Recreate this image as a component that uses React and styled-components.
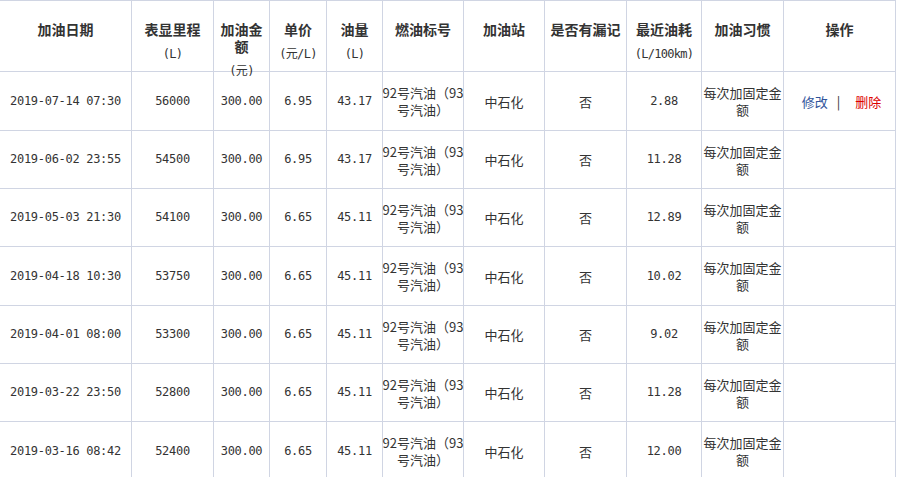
import React from 'react';
import styled, { createGlobalStyle } from 'styled-components';

const GlobalStyle = createGlobalStyle`
  html, body {
    margin: 0;
    padding: 0;
    background: #fff;
  }
  body {
    font-family: "Noto Sans CJK SC", sans-serif;
    color: #333;
  }
`;

const line = '#d0d5e3';
const mono = '"DejaVu Sans Mono", "Noto Sans CJK SC", monospace';
const cjk = '"Noto Sans CJK SC", "Noto Sans", sans-serif';

const Table = styled.div`
  display: grid;
  grid-template-columns: 132px 82px 56px 57px 56px 81px 81px 82px 75px 82px 112px;
  grid-template-rows: 71px 59px 58px 58px 59px 58px 58px 59px;
  width: 896px;
  border-top: 1px solid ${line};
  box-sizing: border-box;
`;

const HeadCell = styled.div`
  box-sizing: border-box;
  border-right: 1px solid ${line};
  border-bottom: 1px solid ${line};
  padding: 20px 4px 0;
  text-align: center;
  color: #333;
`;

const HeadTitle = styled.div`
  font-family: ${cjk};
  font-weight: bold;
  font-size: 14px;
  line-height: 17px;
`;

const HeadUnit = styled.div`
  margin-top: 8px;
  font-family: ${mono};
  font-size: 12px;
  letter-spacing: -0.7px;
  line-height: 17px;
  white-space: nowrap;
`;

const Cell = styled.div`
  box-sizing: border-box;
  border-right: 1px solid ${line};
  border-bottom: 1px solid ${line};
  display: flex;
  flex-direction: column;
  align-items: center;
  justify-content: center;
  text-align: center;
  padding: 0 ${p => (p.$tight ? 0 : 2)}px;
  padding-left: ${p => (p.$ops ? 6 : p.$tight ? 0 : 2)}px;
  font-family: ${p => (p.$num ? mono : cjk)};
  font-size: ${p => (p.$num ? 12 : 13)}px;
  letter-spacing: ${p => (p.$num ? '-0.3px' : 'normal')};
  line-height: 17px;
  color: #333;
  white-space: nowrap;
`;

const Line = styled.span`
  display: block;
  white-space: nowrap;
`;

const Ops = styled.div`
  display: flex;
  align-items: center;
  font-family: ${cjk};
  font-size: 13px;
`;

const OpLink = styled.a`
  color: ${p => (p.$danger ? '#dd0000' : '#2f539b')};
  text-decoration: none;
  cursor: pointer;
`;

const Sep = styled.span`
  margin: 0 15px 0 9px;
  color: #333;
`;

const headers = [
  { title: '加油日期' },
  { title: '表显里程', unit: '(L)' },
  { title: '加油金额', unit: '(元)' },
  { title: '单价', unit: '(元/L)' },
  { title: '油量', unit: '(L)' },
  { title: '燃油标号' },
  { title: '加油站' },
  { title: '是否有漏记' },
  { title: '最近油耗', unit: '(L/100km)' },
  { title: '加油习惯' },
  { title: '操作' },
];

const rows = [
  ['2019-07-14 07:30', '56000', '300.00', '6.95', '43.17', '2.88', true],
  ['2019-06-02 23:55', '54500', '300.00', '6.95', '43.17', '11.28'],
  ['2019-05-03 21:30', '54100', '300.00', '6.65', '45.11', '12.89'],
  ['2019-04-18 10:30', '53750', '300.00', '6.65', '45.11', '10.02'],
  ['2019-04-01 08:00', '53300', '300.00', '6.65', '45.11', '9.02'],
  ['2019-03-22 23:50', '52800', '300.00', '6.65', '45.11', '11.28'],
  ['2019-03-16 08:42', '52400', '300.00', '6.65', '45.11', '12.00'],
];

function Lines({ text }) {
  return text.split('\n').map(t => <Line key={t}>{t}</Line>);
}

function App() {
  return (
    <>
      <GlobalStyle />
      <Table>
        {headers.map(h => (
          <HeadCell key={h.title}>
            <HeadTitle>{h.title}</HeadTitle>
            {h.unit && <HeadUnit>{h.unit}</HeadUnit>}
          </HeadCell>
        ))}
        {rows.map(([date, mileage, amount, price, volume, usage, editable]) => (
          <React.Fragment key={date}>
            <Cell $num>{date}</Cell>
            <Cell $num>{mileage}</Cell>
            <Cell $num>{amount}</Cell>
            <Cell $num>{price}</Cell>
            <Cell $num>{volume}</Cell>
            <Cell $tight>
              <Lines text={'92号汽油（93\n号汽油）'} />
            </Cell>
            <Cell>中石化</Cell>
            <Cell>否</Cell>
            <Cell $num>{usage}</Cell>
            <Cell $tight>
              <Lines text={'每次加固定金\n额'} />
            </Cell>
            <Cell $ops>
              {editable && (
                <Ops>
                  <OpLink>修改</OpLink>
                  <Sep>|</Sep>
                  <OpLink $danger>删除</OpLink>
                </Ops>
              )}
            </Cell>
          </React.Fragment>
        ))}
      </Table>
    </>
  );
}

export default App;
